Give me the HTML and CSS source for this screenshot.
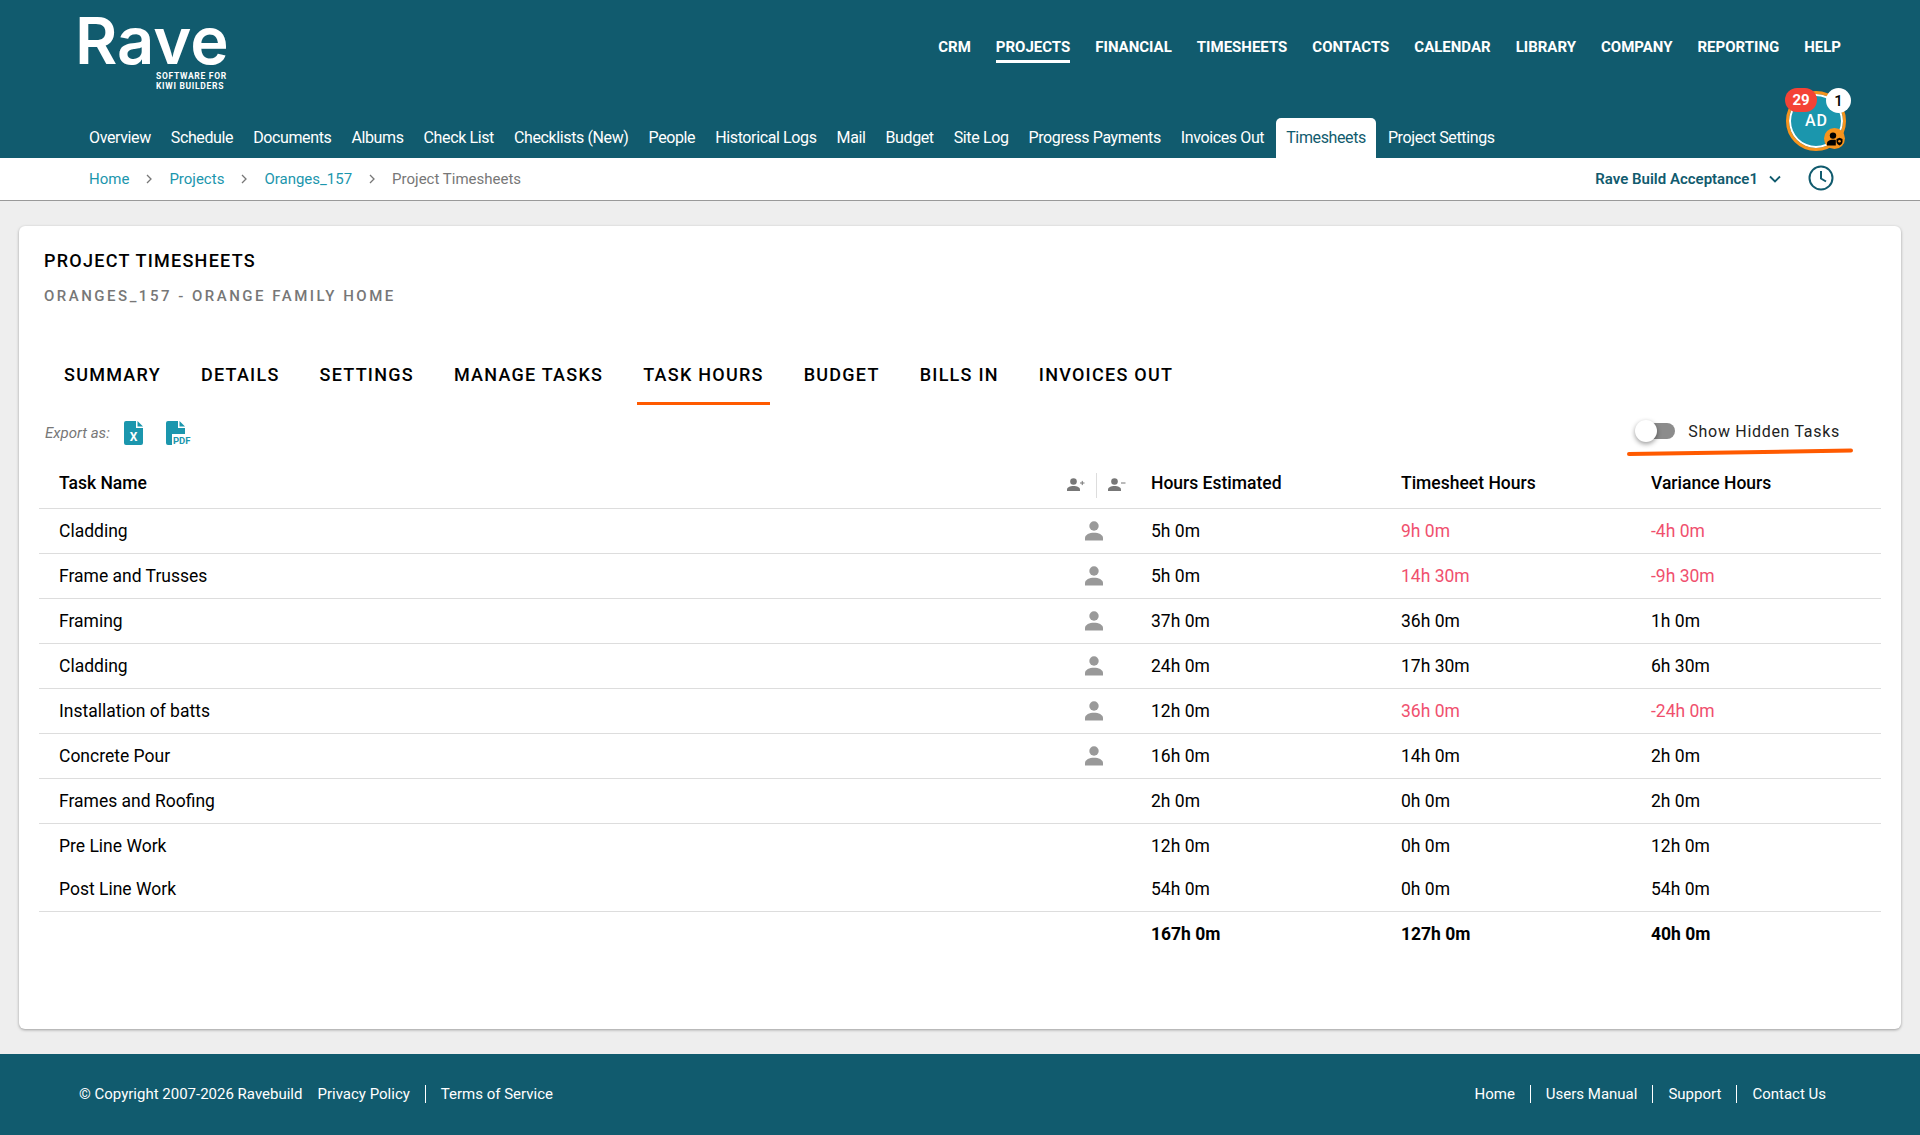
FILE: index.html
```html
<!DOCTYPE html>
<html>

<head>
    <meta charset="UTF-8" />
    <meta name="viewport" content="width=device-width, initial-scale=1.0" />
    <title>Project Timesheets</title>
    <link rel="stylesheet" href="styles.css">
</head>

<body>
    <header class="header">
        <div class="top-row">
            <div class="logo">
                <div class="logo-name">Rave</div>
                <div class="logo-tag">SOFTWARE FOR<br>KIWI BUILDERS</div>
            </div>
            <nav class="main-nav">
                <a>CRM</a>
                <a class="active">PROJECTS</a>
                <a>FINANCIAL</a>
                <a>TIMESHEETS</a>
                <a>CONTACTS</a>
                <a>CALENDAR</a>
                <a>LIBRARY</a>
                <a>COMPANY</a>
                <a>REPORTING</a>
                <a>HELP</a>
            </nav>
        </div>
        <nav class="sub-nav">
            <a>Overview</a>
            <a>Schedule</a>
            <a>Documents</a>
            <a>Albums</a>
            <a>Check List</a>
            <a>Checklists (New)</a>
            <a>People</a>
            <a>Historical Logs</a>
            <a>Mail</a>
            <a>Budget</a>
            <a>Site Log</a>
            <a>Progress Payments</a>
            <a>Invoices Out</a>
            <a class="active">Timesheets</a>
            <a>Project Settings</a>
        </nav>
        <div class="avatar">
            <span class="avatar-text">AD</span>
            <span class="badge badge-red">29</span>
            <span class="badge badge-white">1</span>
            <span class="avatar-role">
                <svg width="16" height="14" viewBox="0 0 16 14">
                    <circle cx="6" cy="3.6" r="3.2" fill="#000" />
                    <path d="M0 13.5v-2.2c0-2.2 2.8-3.6 6-3.6 1 0 2 .1 2.8.4v5.4z" fill="#000" />
                    <path d="M9.5 7l3-1.2 3 1.2v2.6c0 1.9-1.3 3.3-3 3.9-1.7-.6-3-2-3-3.9z" fill="#000" />
                    <circle cx="12.5" cy="9.3" r="1.3" fill="#f7941d" />
                </svg>
            </span>
        </div>
    </header>

    <div class="breadcrumb">
        <div class="crumbs">
            <a>Home</a>
            <svg class="crumb-sep" width="6" height="10" viewBox="0 0 6 10"><path d="M1 1l4 4-4 4" /></svg>
            <a>Projects</a>
            <svg class="crumb-sep" width="6" height="10" viewBox="0 0 6 10"><path d="M1 1l4 4-4 4" /></svg>
            <a>Oranges_157</a>
            <svg class="crumb-sep" width="6" height="10" viewBox="0 0 6 10"><path d="M1 1l4 4-4 4" /></svg>
            <span>Project Timesheets</span>
        </div>
        <div class="company">
            <span>Rave Build Acceptance1</span>
            <svg class="company-arrow" width="12" height="8" viewBox="0 0 12 8"><path d="M1 1.5l5 5 5-5" /></svg>
            <svg class="clock" width="26" height="26" viewBox="0 0 26 26">
                <circle cx="13" cy="13" r="11.5" />
                <path d="M13 6v7.5l5 3" />
            </svg>
        </div>
    </div>

    <main class="content">
        <section class="card">
            <h1 class="title">PROJECT TIMESHEETS</h1>
            <div class="subtitle">ORANGES_157 - ORANGE FAMILY HOME</div>

            <ul class="tabs">
                <li>SUMMARY</li>
                <li>DETAILS</li>
                <li>SETTINGS</li>
                <li>MANAGE TASKS</li>
                <li class="active">TASK HOURS</li>
                <li>BUDGET</li>
                <li>BILLS IN</li>
                <li>INVOICES OUT</li>
            </ul>

            <div class="toolbar">
                <div class="export">
                    <span class="export-label">Export as:</span>
                    <svg class="file-icon" width="19" height="24" viewBox="0 0 19 24">
                        <path d="M2 0h10v7h7v15a2 2 0 0 1-2 2H2a2 2 0 0 1-2-2V2a2 2 0 0 1 2-2z" />
                        <path d="M13.5 0l5.5 5.5h-5.5z" />
                        <text x="9.5" y="20" text-anchor="middle" class="file-x">X</text>
                    </svg>
                    <svg class="file-icon file-pdf" width="25" height="24" viewBox="0 0 25 24">
                        <path d="M2 0h10v7h7v6H6v11H2a2 2 0 0 1-2-2V2a2 2 0 0 1 2-2z" />
                        <path d="M13.5 0l5.500 5.500h-5.500z" />
                        <text x="7" y="23" class="file-pdf-text">PDF</text>
                    </svg>
                </div>
                <div class="hidden-toggle">
                    <span class="switch"><span class="knob"></span></span>
                    <span>Show Hidden Tasks</span>
                    <svg class="scribble" width="226" height="8" viewBox="0 0 226 8">
                        <path d="M2 6C60 5 160 4 224 2.500" />
                    </svg>
                </div>
            </div>

            <table class="hours">
                <colgroup>
                    <col>
                    <col class="col-icon">
                    <col class="col-num">
                    <col class="col-num">
                    <col class="col-num">
                </colgroup>
                <thead>
                    <tr>
                        <th>Task Name</th>
                        <th class="assign">
                            <div class="assign-icons">
                                <svg width="18" height="14" viewBox="0 0 18 14">
                                    <circle cx="6.500" cy="3.500" r="3.300" />
                                    <path d="M0 13v-1.500c0-2.300 3-3.500 6.500-3.500s6.500 1.200 6.500 3.500V13z" />
                                    <path d="M13 5h4.500M15.250 2.900v4.200" class="sign" />
                                </svg>
                                <span class="assign-line"></span>
                                <svg width="18" height="14" viewBox="0 0 18 14">
                                    <circle cx="6.500" cy="3.500" r="3.300" />
                                    <path d="M0 13v-1.500c0-2.300 3-3.500 6.500-3.500s6.500 1.200 6.500 3.500V13z" />
                                    <path d="M13 5h4.500" class="sign" />
                                </svg>
                            </div>
                        </th>
                        <th>Hours Estimated</th>
                        <th>Timesheet Hours</th>
                        <th>Variance Hours</th>
                    </tr>
                </thead>
                <tbody>
                    <tr>
                        <td>Cladding</td>
                        <td class="assign"><svg class="person" width="18" height="20" viewBox="0 0 18 20"><circle cx="9" cy="5" r="4.700" /><path d="M0 19.500v-2.500c0-3.400 4.500-5.300 9-5.300s9 1.900 9 5.300v2.500z" /></svg></td>
                        <td>5h 0m</td>
                        <td class="over">9h 0m</td>
                        <td class="over">-4h 0m</td>
                    </tr>
                    <tr>
                        <td>Frame and Trusses</td>
                        <td class="assign"><svg class="person" width="18" height="20" viewBox="0 0 18 20"><circle cx="9" cy="5" r="4.700" /><path d="M0 19.500v-2.500c0-3.400 4.500-5.300 9-5.300s9 1.900 9 5.300v2.500z" /></svg></td>
                        <td>5h 0m</td>
                        <td class="over">14h 30m</td>
                        <td class="over">-9h 30m</td>
                    </tr>
                    <tr>
                        <td>Framing</td>
                        <td class="assign"><svg class="person" width="18" height="20" viewBox="0 0 18 20"><circle cx="9" cy="5" r="4.700" /><path d="M0 19.500v-2.500c0-3.400 4.500-5.300 9-5.300s9 1.900 9 5.300v2.500z" /></svg></td>
                        <td>37h 0m</td>
                        <td>36h 0m</td>
                        <td>1h 0m</td>
                    </tr>
                    <tr>
                        <td>Cladding</td>
                        <td class="assign"><svg class="person" width="18" height="20" viewBox="0 0 18 20"><circle cx="9" cy="5" r="4.700" /><path d="M0 19.500v-2.500c0-3.400 4.500-5.300 9-5.300s9 1.900 9 5.300v2.500z" /></svg></td>
                        <td>24h 0m</td>
                        <td>17h 30m</td>
                        <td>6h 30m</td>
                    </tr>
                    <tr>
                        <td>Installation of batts</td>
                        <td class="assign"><svg class="person" width="18" height="20" viewBox="0 0 18 20"><circle cx="9" cy="5" r="4.700" /><path d="M0 19.500v-2.500c0-3.400 4.500-5.300 9-5.300s9 1.900 9 5.300v2.500z" /></svg></td>
                        <td>12h 0m</td>
                        <td class="over">36h 0m</td>
                        <td class="over">-24h 0m</td>
                    </tr>
                    <tr>
                        <td>Concrete Pour</td>
                        <td class="assign"><svg class="person" width="18" height="20" viewBox="0 0 18 20"><circle cx="9" cy="5" r="4.700" /><path d="M0 19.500v-2.500c0-3.400 4.500-5.300 9-5.300s9 1.900 9 5.300v2.500z" /></svg></td>
                        <td>16h 0m</td>
                        <td>14h 0m</td>
                        <td>2h 0m</td>
                    </tr>
                    <tr>
                        <td>Frames and Roofing</td>
                        <td></td>
                        <td>2h 0m</td>
                        <td>0h 0m</td>
                        <td>2h 0m</td>
                    </tr>
                    <tr class="no-line">
                        <td>Pre Line Work</td>
                        <td></td>
                        <td>12h 0m</td>
                        <td>0h 0m</td>
                        <td>12h 0m</td>
                    </tr>
                    <tr class="short">
                        <td>Post Line Work</td>
                        <td></td>
                        <td>54h 0m</td>
                        <td>0h 0m</td>
                        <td>54h 0m</td>
                    </tr>
                </tbody>
                <tfoot>
                    <tr>
                        <td></td>
                        <td></td>
                        <td>167h 0m</td>
                        <td>127h 0m</td>
                        <td>40h 0m</td>
                    </tr>
                </tfoot>
            </table>
        </section>
    </main>

    <footer class="footer">
        <div class="footer-left">
            <span class="copyright">© Copyright 2007-2026 Ravebuild</span>
            <a>Privacy Policy</a>
            <a>Terms of Service</a>
        </div>
        <div class="footer-right">
            <a>Home</a>
            <a>Users Manual</a>
            <a>Support</a>
            <a>Contact Us</a>
        </div>
    </footer>
</body>

</html>
```

FILE: styles.css
```css
* {
    box-sizing: border-box;
    margin: 0;
    padding: 0;
    font-family: "Roboto", sans-serif;
}

body {
    background: #eeeeee;
    color: #000;
}

/* header */
.header {
    position: relative;
    height: 158px;
    background: #115b6e;
    color: #fff;
}

.top-row {
    display: flex;
    justify-content: space-between;
    height: 118px;
    padding: 0 79px 0 75px;
}

.logo {
    padding-top: 11px;
}

.logo-name {
    font-family: "Inter", sans-serif;
    font-size: 65px;
    font-weight: 600;
    line-height: 60px;
    letter-spacing: 0;
}

.logo-tag {
    font-size: 8.500px;
    font-weight: 700;
    line-height: 10px;
    letter-spacing: 0.700px;
    margin-left: 81px;
    white-space: nowrap;
}

.main-nav {
    display: flex;
    align-items: flex-start;
    gap: 25px;
    padding-top: 37px;
}

.main-nav a {
    font-size: 15px;
    font-weight: 700;
    line-height: 20px;
    padding-bottom: 3px;
    border-bottom: 3px solid transparent;
}

.main-nav a.active {
    border-bottom-color: #fff;
}

.sub-nav {
    display: flex;
    padding-left: 79px;
}

.sub-nav a {
    height: 40px;
    padding: 0 10px;
    font-size: 16px;
    line-height: 39px;
    letter-spacing: -0.380px;
    white-space: nowrap;
}

.sub-nav a.active {
    margin: 0 2px;
    background: #fff;
    color: #115b6e;
    border-radius: 5px 5px 0 0;
}

.avatar {
    position: absolute;
    left: 1786px;
    top: 91px;
    width: 60px;
    height: 60px;
    display: flex;
    align-items: center;
    justify-content: center;
    border-radius: 50%;
    background: #1b96ad;
    border: 3px solid #f7941d;
    box-shadow: inset 0 0 0 2px #fff;
}

.avatar-text {
    margin: 0 0 2px 1px;
    font-size: 16px;
    font-weight: 500;
    letter-spacing: 1px;
}

.badge {
    position: absolute;
    display: flex;
    align-items: center;
    justify-content: center;
    font-size: 15px;
    font-weight: 500;
}

.badge-red {
    left: -4px;
    top: -6px;
    width: 32px;
    height: 24px;
    border-radius: 12px;
    background: #f44336;
    color: #fff;
    font-weight: 700;
}

.badge-white {
    left: 37px;
    top: -6px;
    width: 25px;
    height: 25px;
    border-radius: 50%;
    background: #fff;
    color: #000;
}

.avatar-role {
    position: absolute;
    left: 35px;
    top: 34px;
    width: 21px;
    height: 21px;
    display: flex;
    align-items: center;
    justify-content: center;
    border-radius: 50%;
    background: #f7941d;
}

/* breadcrumb */
.breadcrumb {
    display: flex;
    justify-content: space-between;
    align-items: center;
    height: 43px;
    padding: 0 86px 0 89px;
    background: #fff;
    border-bottom: 1px solid #999;
    font-size: 15px;
}

.crumbs {
    display: flex;
    align-items: center;
    gap: 17px;
    color: #777;
}

.crumbs a {
    color: #1b96ad;
}

.crumb-sep {
    fill: none;
    stroke: #777;
    stroke-width: 1.300;
}

.company {
    display: flex;
    align-items: center;
    color: #115b6e;
    font-weight: 600;
}

.company-arrow {
    margin-left: 11px;
    fill: none;
    stroke: #115b6e;
    stroke-width: 1.800;
}

.clock {
    margin: 0 0 2px 27px;
    fill: none;
    stroke: #115b6e;
    stroke-width: 2;
}

/* card */
.content {
    padding: 25px 19px;
}

.card {
    height: 803px;
    padding: 25px 20px 0;
    background: #fff;
    border-radius: 6px;
    box-shadow: 0 1px 3px rgba(0, 0, 0, 0.35);
}

.title {
    padding-left: 5px;
    font-size: 18px;
    font-weight: 500;
    line-height: 20px;
    letter-spacing: 1.250px;
}

.subtitle {
    margin-top: 15px;
    padding-left: 5px;
    font-size: 15px;
    font-weight: 500;
    line-height: 20px;
    letter-spacing: 2.500px;
    color: #777;
}

.tabs {
    display: flex;
    gap: 28px;
    margin-top: 59px;
    padding-left: 19px;
    list-style: none;
}

.tabs li {
    padding: 0 6px 17px;
    border-bottom: 3px solid transparent;
    font-size: 18px;
    font-weight: 500;
    line-height: 20px;
    letter-spacing: 1.250px;
    white-space: nowrap;
}

.tabs li.active {
    border-bottom-color: #ff5a00;
}

.toolbar {
    display: flex;
    justify-content: space-between;
    height: 58px;
    padding: 16px 41px 0 6px;
}

.export {
    display: flex;
    align-items: flex-start;
}

.export-label {
    margin-right: 14px;
    font-size: 15px;
    font-style: italic;
    line-height: 24px;
    color: #777;
}

.file-icon {
    fill: #1b96ad;
}

.file-pdf {
    margin-left: 23px;
}

.file-x {
    font-size: 12px;
    font-weight: 700;
    fill: #fff;
}

.file-pdf-text {
    font-size: 9.500px;
    font-weight: 700;
}

.hidden-toggle {
    position: relative;
    display: flex;
    align-items: center;
    gap: 13px;
    height: 20px;
    font-size: 16px;
    letter-spacing: 0.700px;
    color: #222;
}

.switch {
    position: relative;
    width: 35px;
    height: 16px;
    border-radius: 8px;
    background: #8c8c8c;
}

.knob {
    position: absolute;
    left: -5px;
    top: -3px;
    width: 22px;
    height: 22px;
    border-radius: 50%;
    background: #fff;
    box-shadow: 0 2px 5px rgba(0, 0, 0, 0.4);
}

.scribble {
    position: absolute;
    left: -13px;
    top: 27px;
    fill: none;
    stroke: #ff5a00;
    stroke-width: 4;
    stroke-linecap: round;
}

/* table */
.hours {
    width: 100%;
    border-collapse: collapse;
    table-layout: fixed;
    font-size: 17.500px;
}

.col-icon {
    width: 74px;
}

.col-num {
    width: 250px;
}

.hours th,
.hours td {
    height: 45px;
    padding: 0 20px;
    text-align: left;
    font-weight: 400;
    border-bottom: 1px solid #ddd;
}

.hours th {
    padding-bottom: 4px;
    font-weight: 500;
}

.hours .assign {
    padding: 0;
    text-align: center;
}

.assign-icons {
    display: flex;
    justify-content: center;
    align-items: center;
    gap: 11px;
    padding-left: 5px;
    fill: #777;
}

.assign-line {
    width: 1px;
    height: 25px;
    background: #ddd;
}

.sign {
    fill: none;
    stroke: #777;
    stroke-width: 1;
}

.person {
    display: block;
    margin: auto;
    fill: #999;
}

.over {
    color: #f0506e;
}

.hours tr.no-line td {
    border-bottom: none;
}

.hours tr.short td {
    height: 43px;
}

.hours tfoot td {
    border-bottom: none;
    font-weight: 700;
}

/* footer */
.footer {
    display: flex;
    justify-content: space-between;
    align-items: center;
    height: 81px;
    padding: 0 94px 2px 79px;
    background: #115b6e;
    color: #fff;
    font-size: 15px;
}

.footer-left,
.footer-right {
    display: flex;
    align-items: center;
}

.copyright {
    margin-right: 15px;
}

.footer a {
    padding: 0 15px;
    line-height: 18px;
    border-left: 1px solid #fff;
}

.footer-left a:first-of-type,
.footer-right a:first-child {
    border-left: none;
}

.footer-left a:first-of-type {
    padding-left: 0;
}

.footer-right a:last-child {
    padding-right: 0;
}
```
